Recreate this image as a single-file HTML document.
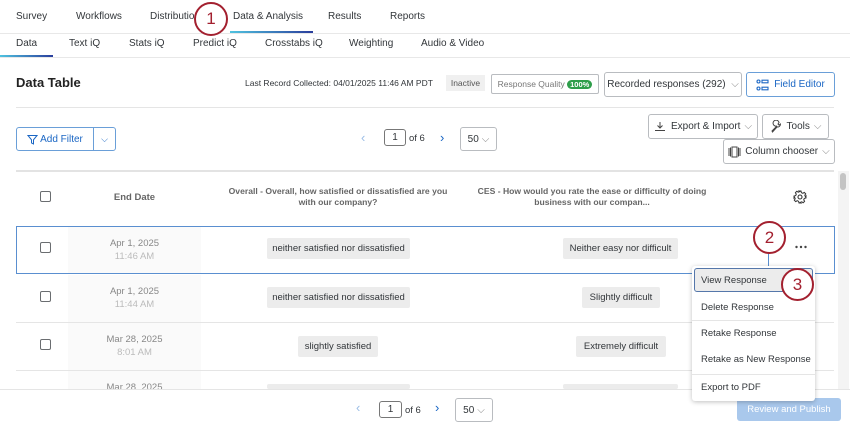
<!DOCTYPE html>
<html><head><meta charset="utf-8"><style>
*{box-sizing:border-box;margin:0;padding:0}
body{width:850px;height:425px;overflow:hidden;background:#fff;font-family:"Liberation Sans",sans-serif;color:#32363a;position:relative;font-size:10px}
.a{position:absolute;white-space:nowrap}
.btn{position:absolute;border:1px solid #b9bcc0;border-radius:3px;background:#fff;display:flex;align-items:center;justify-content:center;font-size:10px;color:#32363a}
.pill{position:absolute;background:#ececec;border-radius:2px;font-size:9.5px;color:#32363a;display:flex;align-items:center;justify-content:center;height:21px}
.cb{position:absolute;left:40px;width:11px;height:11px;border:1px solid #6a6d70;border-radius:2px;background:#fff}
.hl{position:absolute;left:16px;width:818px;height:1px;background:#e5e5e5}
.dt{position:absolute;left:68px;width:133px;text-align:center;font-size:9.5px;color:#888;line-height:13px;background:#fafafa}
.dt span{color:#bbb;display:block}
.circ{position:absolute;border:2.5px solid #a3202f;border-radius:50%;background:#fff;color:#a3202f;font-size:17px;display:flex;align-items:center;justify-content:center}
.mi{position:absolute;left:701px;font-size:9.5px;color:#32363a}
.nav{top:11px;font-size:10px}
</style></head><body>
<div class="a" style="left:0;top:33px;width:850px;height:1px;background:#e8e8e8"></div>
<div class="a" style="left:230px;top:31px;width:83px;height:2px;background:linear-gradient(90deg,#4fc3e0,#2a3d9c)"></div>
<div class="a nav" style="left:16px">Survey</div>
<div class="a nav" style="left:76px">Workflows</div>
<div class="a nav" style="left:150px">Distributio</div>
<div class="a nav" style="left:233px">Data &amp; Analysis</div>
<div class="a nav" style="left:328px">Results</div>
<div class="a nav" style="left:390px">Reports</div>
<div class="a" style="left:0;top:57px;width:850px;height:1px;background:#e8e8e8"></div>
<div class="a" style="left:0;top:55px;width:53px;height:2px;background:linear-gradient(90deg,#4fc3e0,#2a3d9c)"></div>
<div class="a" style="top:38px;left:16px">Data</div>
<div class="a" style="top:38px;left:69px">Text iQ</div>
<div class="a" style="top:38px;left:129px">Stats iQ</div>
<div class="a" style="top:38px;left:193px">Predict iQ</div>
<div class="a" style="top:38px;left:265px">Crosstabs iQ</div>
<div class="a" style="top:38px;left:349px">Weighting</div>
<div class="a" style="top:38px;left:421px">Audio &amp; Video</div>
<div class="a" style="top:75px;left:16px;font-size:13px;font-weight:bold;color:#222">Data Table</div>
<div class="a" style="top:78px;left:245px;font-size:8.5px">Last Record Collected: 04/01/2025 11:46 AM PDT</div>
<div class="a" style="top:75px;left:446px;width:39px;height:16px;background:#f0f0f0;font-size:8.5px;color:#555;display:flex;align-items:center;justify-content:center">Inactive</div>
<div class="btn" style="left:491px;top:74px;width:108px;height:20px;font-size:8.5px;color:#777;border-radius:2px">Response Quality&nbsp;<span style="background:#2e9e4a;color:#fff;border-radius:6px;font-size:7.5px;padding:0 3px;font-weight:bold">100%</span></div>
<div class="btn" style="left:604px;top:72px;width:138px;height:25px">Recorded responses (292) &nbsp;<span style="color:#888">⌵</span></div>
<div class="btn" style="left:746px;top:72px;width:89px;height:25px;border-color:#6a9fd8;color:#1a66c4"><svg width="13" height="12" viewBox="0 0 13 12" style="margin-right:5px"><g fill="none" stroke="#1a66c4" stroke-width="1.1"><circle cx="2.5" cy="2.5" r="1.5"/><rect x="6" y="1.2" width="6" height="2.6"/><circle cx="2.5" cy="9.5" r="1.5"/><rect x="6" y="8.2" width="6" height="2.6"/></g></svg>Field Editor</div>
<div class="a" style="left:16px;top:107px;width:818px;height:1px;background:#e5e5e5"></div>
<div class="btn" style="left:16px;top:127px;width:100px;height:24px;border-color:#6a9fd8;color:#1a66c4;justify-content:flex-start"><span style="width:77px;display:flex;align-items:center;justify-content:center;border-right:1px solid #6a9fd8;height:100%"><svg width="11" height="11" viewBox="0 0 11 11" style="margin-right:2px"><path d="M1 1.5h9L6.5 5.8V10L4.5 9V5.8z" fill="none" stroke="#1a66c4" stroke-width="1"/></svg>Add Filter</span><span style="flex:1;text-align:center;font-size:9px">⌵</span></div>
<div class="a" style="left:361px;top:130px;color:#9bbde6;font-size:13px">‹</div>
<div class="btn" style="left:384px;top:129px;width:22px;height:17px;border-color:#777">1</div>
<div class="a" style="left:409px;top:133px;font-size:9.5px">of 6</div>
<div class="a" style="left:440px;top:130px;color:#1a66c4;font-size:13px">›</div>
<div class="btn" style="left:460px;top:127px;width:37px;height:24px">50 <span style="color:#888;margin-left:3px">⌵</span></div>
<div class="btn" style="left:648px;top:114px;width:110px;height:25px"><svg width="12" height="11" viewBox="0 0 12 11" style="margin-right:5px"><path d="M6 1v6M3.5 4.5L6 7l2.5-2.5M1 9.5h10" fill="none" stroke="#444" stroke-width="1"/></svg>Export &amp; Import <span style="color:#888;margin-left:4px">⌵</span></div>
<div class="btn" style="left:762px;top:114px;width:67px;height:25px"><svg width="13" height="13" viewBox="0 0 13 13" style="margin-right:4px"><path d="M2 11l5-5a3 3 0 1 1 2 -3.5L8 4l1 1 1.5-1a3 3 0 0 1-3.5 3L2.5 12z" fill="none" stroke="#444" stroke-width="1"/></svg>Tools <span style="color:#888;margin-left:4px">⌵</span></div>
<div class="btn" style="left:723px;top:139px;width:112px;height:25px"><svg width="13" height="12" viewBox="0 0 13 12" style="margin-right:4px"><g fill="none" stroke="#444" stroke-width="1"><rect x="4" y="1" width="5" height="10"/><path d="M1 2v8M12 2v8M2.5 1.5v9M10.5 1.5v9"/></g></svg>Column chooser <span style="color:#888;margin-left:4px">⌵</span></div>
<div class="a" style="left:16px;top:170px;width:818px;height:2px;background:#e3e3e3"></div>
<div class="cb" style="top:191px"></div>
<div class="a" style="left:68px;top:192px;width:133px;text-align:center;font-size:9.5px;font-weight:bold;color:#666">End Date</div>
<div class="a" style="left:219px;top:186px;width:238px;text-align:center;font-size:8.6px;font-weight:bold;color:#666;line-height:11px;white-space:normal">Overall - Overall, how satisfied or dissatisfied are you with our company?</div>
<div class="a" style="left:474px;top:186px;width:236px;text-align:center;font-size:8.6px;font-weight:bold;color:#666;line-height:11px;white-space:normal">CES - How would you rate the ease or difficulty of doing business with our compan...</div>
<svg class="a" style="left:793px;top:190px" width="14" height="14" viewBox="0 0 14 14"><circle cx="7" cy="7" r="2" fill="none" stroke="#333" stroke-width="1.1"/><path d="M6 1h2l.4 1.7 1.4.6 1.5-.9 1.4 1.4-.9 1.5.6 1.4L13 6v2l-1.7.4-.6 1.4.9 1.5-1.4 1.4-1.5-.9-1.4.6L8 13H6l-.4-1.7-1.4-.6-1.5.9-1.4-1.4.9-1.5-.6-1.4L1 8V6l1.7-.4.6-1.4-.9-1.5 1.4-1.4 1.5.9 1.4-.6z" fill="none" stroke="#333" stroke-width="1"/></svg>
<div class="a" style="left:16px;top:226px;width:819px;height:48px;border:1px solid #5a8fd0"></div>
<div class="dt" style="top:227px;height:46px;padding-top:10px">Apr 1, 2025<span>11:46 AM</span></div>
<div class="cb" style="top:242px"></div>
<div class="pill" style="left:267px;top:238px;width:143px">neither satisfied nor dissatisfied</div>
<div class="pill" style="left:563px;top:238px;width:115px">Neither easy nor difficult</div>
<svg class="a" style="left:795px;top:245px" width="12" height="4"><circle cx="1.5" cy="2" r="1.2" fill="#444"/><circle cx="6" cy="2" r="1.2" fill="#444"/><circle cx="10.5" cy="2" r="1.2" fill="#444"/></svg>
<div class="hl" style="top:322px"></div>
<div class="dt" style="top:275px;height:47px;padding-top:10px">Apr 1, 2025<span>11:44 AM</span></div>
<div class="cb" style="top:291px"></div>
<div class="pill" style="left:267px;top:287px;width:143px">neither satisfied nor dissatisfied</div>
<div class="pill" style="left:582px;top:287px;width:78px">Slightly difficult</div>
<div class="hl" style="top:370px"></div>
<div class="dt" style="top:323px;height:47px;padding-top:10px">Mar 28, 2025<span>8:01 AM</span></div>
<div class="cb" style="top:339px"></div>
<div class="pill" style="left:298px;top:336px;width:80px">slightly satisfied</div>
<div class="pill" style="left:576px;top:336px;width:90px">Extremely difficult</div>
<div class="dt" style="top:371px;height:18px;padding-top:10px;overflow:hidden">Mar 28, 2025</div>
<div class="pill" style="left:267px;top:384px;width:143px;height:5px"></div>
<div class="pill" style="left:563px;top:384px;width:115px;height:5px"></div>
<div class="a" style="left:838px;top:171px;width:11px;height:218px;background:#f4f4f4"></div>
<div class="a" style="left:840px;top:173px;width:6px;height:17px;background:#c4c4c4;border-radius:3px"></div>
<div class="a" style="left:0;top:389px;width:850px;height:36px;background:#fff;border-top:1px solid #e5e5e5"></div>
<div class="a" style="left:356px;top:400px;color:#9bbde6;font-size:13px">‹</div>
<div class="btn" style="left:379px;top:401px;width:23px;height:17px;border-color:#777">1</div>
<div class="a" style="left:405px;top:405px;font-size:9.5px">of 6</div>
<div class="a" style="left:435px;top:400px;color:#1a66c4;font-size:13px">›</div>
<div class="btn" style="left:455px;top:398px;width:38px;height:24px">50 <span style="color:#888;margin-left:3px">⌵</span></div>
<div class="a" style="left:737px;top:398px;width:104px;height:23px;background:#a9c8ec;border-radius:3px;color:#fff;font-size:9.5px;display:flex;align-items:center;justify-content:center">Review and Publish</div>
<div class="a" style="left:768px;top:253px;width:1px;height:14px;background:#5a8fd0"></div>
<div class="a" style="left:692px;top:266px;width:123px;height:135px;background:#fff;box-shadow:0 1px 5px rgba(0,0,0,.25);border-radius:3px"></div>
<div class="a" style="left:694px;top:268px;width:119px;height:24px;background:#ececec;border:1px solid #5577aa;border-radius:3px"></div>
<div class="mi" style="top:275px">View Response</div>
<div class="mi" style="top:302px">Delete Response</div>
<div class="a" style="left:692px;top:320px;width:123px;height:1px;background:#e5e5e5"></div>
<div class="mi" style="top:328px">Retake Response</div>
<div class="mi" style="top:354px">Retake as New Response</div>
<div class="a" style="left:692px;top:374px;width:123px;height:1px;background:#e5e5e5"></div>
<div class="mi" style="top:382px">Export to PDF</div>
<div class="circ" style="left:194px;top:2px;width:34px;height:34px">1</div>
<div class="circ" style="left:753px;top:221px;width:33px;height:33px">2</div>
<div class="circ" style="left:781px;top:268px;width:33px;height:33px">3</div>
</body></html>
